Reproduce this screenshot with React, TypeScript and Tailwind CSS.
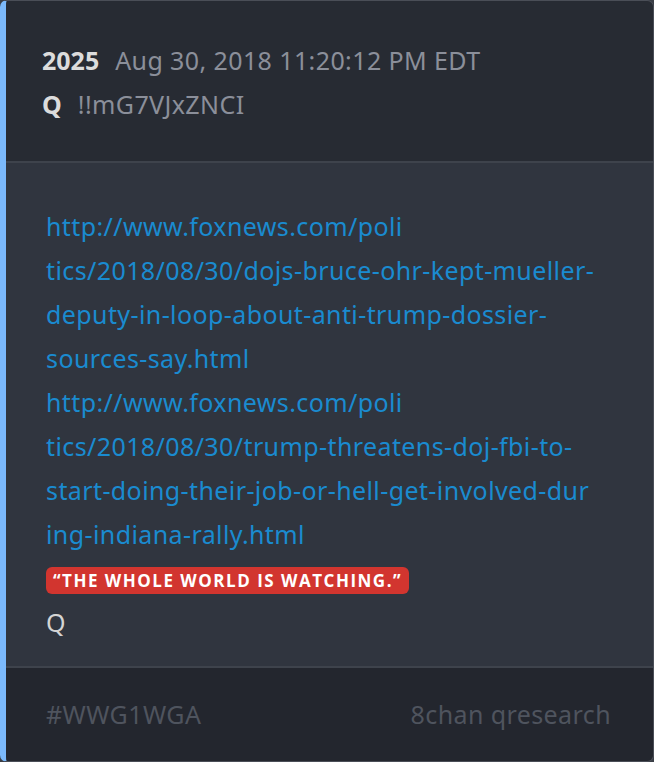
export default function App() {
  const font = { fontFamily: '"Noto Sans", "Open Sans", sans-serif' };
  return (
    <div className="w-[654px] h-[762px] bg-[#3a3e46]" style={font}>
      <div className="w-[654px] h-[762px] flex flex-col rounded-[7px] border border-[#4a4e57] border-l-[6px] border-l-[#7bb9fb] overflow-hidden">
        <div className="bg-[#272b33] pl-[36px] pr-[40px] pt-[37px] pb-[35px] text-[25px] leading-[44px] tracking-[0.4px] border-b-2 border-[#3e434c]">
          <div className="flex items-baseline">
            <span className="font-bold text-[#dcdcdc] text-[25px] tracking-normal">2025</span>
            <span className="ml-[16px] text-[#8b8f9a]">Aug 30, 2018 11:20:12 PM EDT</span>
          </div>
          <div className="flex items-baseline">
            <span className="font-bold text-[#dcdcdc] text-[25px] tracking-normal">Q</span>
            <span className="ml-[16px] text-[#8b8f9a]">!!mG7VJxZNCI</span>
          </div>
        </div>
        <div className="flex-1 bg-[#30353f] pl-[40px] pr-[30px] pt-[41px] text-[25px] leading-[44px] tracking-[0.4px]">
          <div className="text-[#1a8bd0] whitespace-nowrap">
            <div>http://www.foxnews.com/poli</div>
            <div>tics/2018/08/30/dojs-bruce-ohr-kept-mueller-</div>
            <div>deputy-in-loop-about-anti-trump-dossier-</div>
            <div>sources-say.html</div>
            <div>http://www.foxnews.com/poli</div>
            <div>tics/2018/08/30/trump-threatens-doj-fbi-to-</div>
            <div>start-doing-their-job-or-hell-get-involved-dur</div>
            <div>ing-indiana-rally.html</div>
          </div>
          <div className="mt-[11px] flex">
            <span className="inline-flex items-center bg-[#d2352f] text-white font-bold text-[17px] h-[27px] px-[7px] rounded-[6px] tracking-[1.5px]" style={{ fontFamily: '"Open Sans", sans-serif' }}>
              “THE WHOLE WORLD IS WATCHING.”
            </span>
          </div>
          <div className="mt-[6px] text-[#d4d4d4]">Q</div>
        </div>
        <div className="h-[95px] shrink-0 bg-[#23262e] border-t-2 border-[#3e434c] pl-[40px] pr-[42px] flex items-center justify-between text-[25px] tracking-[0.4px] text-[#4f545e]">
          <span>#WWG1WGA</span>
          <span>8chan qresearch</span>
        </div>
      </div>
    </div>
  );
}
